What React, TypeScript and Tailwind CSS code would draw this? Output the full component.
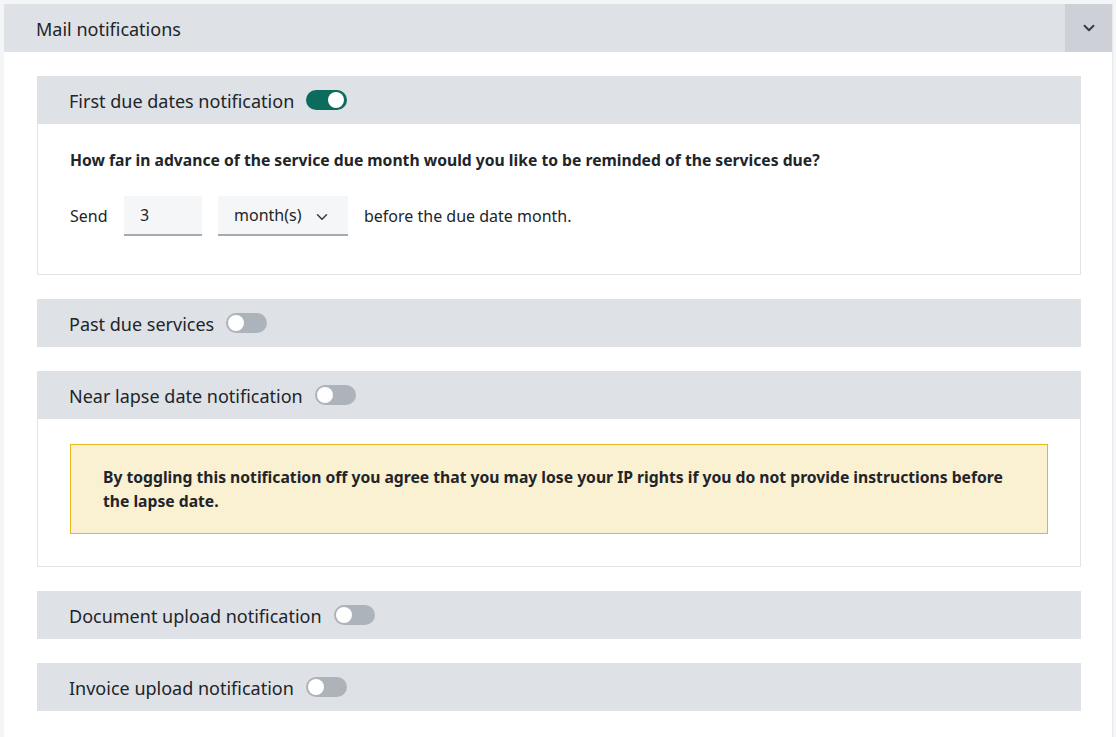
import { ChevronDown } from "lucide-react";

const font = { fontFamily: '"Noto Sans", "Open Sans", sans-serif' };

const Toggle = ({ on }: { on?: boolean }) => (
  <span
    className={`ml-3 relative inline-flex h-5 w-[41px] items-center rounded-full ${
      on ? "bg-[#0b6b5d]" : "bg-[#adb3bb]"
    }`}
  >
    <span
      className={`absolute top-[2px] h-4 w-4 rounded-full bg-white ${on ? "right-[3px]" : "left-[2px]"}`}
    />
  </span>
);

const SectionHeader = ({ title, on }: { title: string; on?: boolean }) => (
  <div className="flex h-12 items-center bg-[#dee1e6] px-8">
    <span className="pt-[2px] text-[18px] text-[#212529]">{title}</span>
    <Toggle on={on} />
  </div>
);

export default function App() {
  return (
    <div style={font} className="min-h-[737px] bg-[#f4f5f7] pl-1 pr-[3px] pt-1">
      <div className="min-h-[733px] border-r border-[#e6e8eb] bg-white">
        {/* Main header */}
        <div className="flex h-12 items-center bg-[#dee1e6]">
          <span className="flex-1 pl-8 pt-[2px] text-[18px] text-[#212529]">Mail notifications</span>
          <button className="flex h-12 w-[47px] items-center justify-center bg-[#cdd1d7]">
            <ChevronDown size={18} strokeWidth={2.5} className="text-[#343a40]" />
          </button>
        </div>

        <div className="flex flex-col gap-6 pb-6 pl-[33px] pr-[31px] pt-6">
          {/* First due dates */}
          <div>
            <SectionHeader title="First due dates notification" on />
            <div className="border border-t-0 border-[#e2e4e7] px-8 pb-[38px] pt-[25px]">
              <p className="text-[15.7px] font-bold leading-[22px] text-[#212529]">
                How far in advance of the service due month would you like to be reminded of the services due?
              </p>
              <div className="mt-[25px] flex items-center text-[16px] text-[#212529]">
                <span className="w-[54px]">Send</span>
                <div className="flex h-10 w-[78px] items-center border-b-2 border-[#a5abb3] bg-[#f5f6f8] pl-4">
                  3
                </div>
                <div className="ml-4 flex h-10 w-[130px] items-center border-b-2 border-[#a5abb3] bg-[#f5f6f8] pl-4">
                  month(s)
                  <ChevronDown size={18} strokeWidth={2} className="ml-3 mt-1 text-[#343a40]" />
                </div>
                <span className="ml-4">before the due date month.</span>
              </div>
            </div>
          </div>

          {/* Past due */}
          <SectionHeader title="Past due services" />

          {/* Near lapse */}
          <div>
            <SectionHeader title="Near lapse date notification" />
            <div className="border border-t-0 border-[#e2e4e7] px-8 pb-8 pt-[25px]">
              <div className="border border-[#e6b71e] bg-[#faf0d2] py-[20px] pl-8 pr-10 text-[15.7px] font-bold leading-6 text-[#212529]">
                By toggling this notification off you agree that you may lose your IP rights if you do not provide
                instructions before the lapse date.
              </div>
            </div>
          </div>

          <SectionHeader title="Document upload notification" />
          <SectionHeader title="Invoice upload notification" />
        </div>
      </div>
    </div>
  );
}
